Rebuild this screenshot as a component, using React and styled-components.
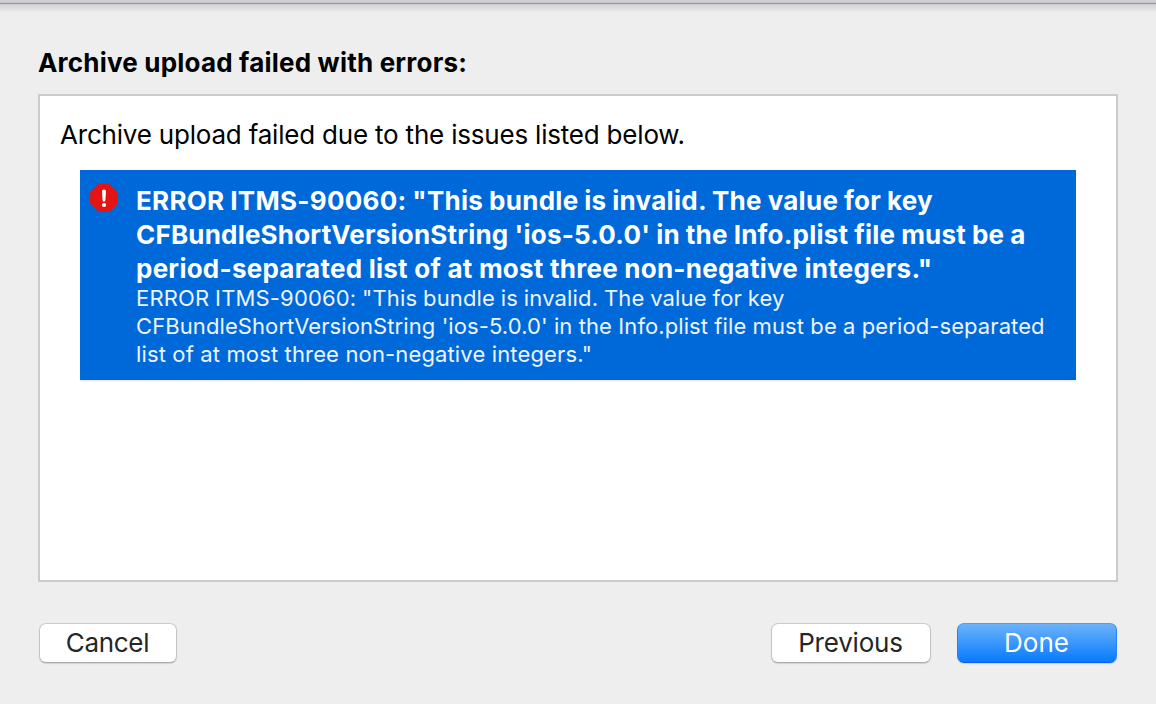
import React from "react";
import styled, { createGlobalStyle } from "styled-components";

const GlobalStyle = createGlobalStyle`
  * { box-sizing: border-box; }
  body { margin: 0; background: #eeeeee; }
`;

const Sheet = styled.main`
  width: 1156px;
  height: 704px;
  display: flex;
  flex-direction: column;
  background: #eeeeee;
  font-family: Inter, "Liberation Sans", sans-serif;
  font-size: 26px;
  color: #000;
  overflow: hidden;
`;

const TopEdge = styled.div`
  flex: none;
  height: 12px;
  background: linear-gradient(
    #d1cfd3 0 2px, #c7c5c9 2px 3px, #98969b 3px 4px, #d0d0d1 4px 5px,
    #d5d5d6 5px 6px, #dadadb 6px 8px, #e0e0e0 8px 10px, #e7e7e7 10px 12px
  );
`;

const Content = styled.div`
  flex: 1;
  display: flex;
  flex-direction: column;
  padding: 34px 38px 40px;
`;

const Heading = styled.h1`
  margin: 0 0 14px;
  font-size: 26px;
  line-height: 34px;
  font-weight: 700;
  letter-spacing: 0.2px;
  white-space: nowrap;
`;

const Panel = styled.section`
  height: 488px;
  padding: 22px 40px;
  border: 2px solid #cbcbcb;
  background: #fff;
`;

const Intro = styled.p`
  margin: 0 0 18px -20px;
  line-height: 34px;
  letter-spacing: -0.2px;
  white-space: nowrap;
`;

const Issue = styled.article`
  display: flex;
  height: 210px;
  padding: 13px 9px;
  background: #0069d9;
  color: #fff;
  box-shadow: 0 2px 0 -0.5px #ebebeb;
`;

const IssueIcon = styled.svg`
  flex: none;
  width: 30px;
  height: 30px;
  margin-right: 17px;
`;

const IssueText = styled.div`
  display: flex;
  flex-direction: column;
  padding-top: 1px;
`;

const Title = styled.div`
  font-weight: 700;
  line-height: 34px;
  white-space: nowrap;
`;

const Detail = styled.div`
  margin-top: -2px;
  font-size: 22px;
  line-height: 28px;
  white-space: nowrap;
  color: #edf4fc;
`;

const Line = styled.div`
  letter-spacing: ${(p) => p.$tracking}px;
  word-spacing: ${(p) => p.$gap}px;
`;

const Actions = styled.footer`
  display: flex;
  gap: 26px;
  margin: 41px 1px 0;
`;

const Button = styled.button`
  width: ${(p) => p.$width}px;
  height: 40px;
  padding: 0 1px 0 0;
  border: 1px solid;
  border-color: ${(p) => (p.$primary ? "#4b9df5 #2a83f7 #0a60f5" : "#cbcbcb #c4c4c4 #acacac")};
  border-radius: 7px;
  background: ${(p) => (p.$primary ? "linear-gradient(#6cb3fa, #077aff)" : "#fff")};
  box-shadow: 0 1px 1px rgba(0, 0, 0, 0.12);
  color: ${(p) => (p.$primary ? "#fff" : "#262626")};
  font: 400 26px/38px Inter, "Liberation Sans", sans-serif;
  letter-spacing: ${(p) => p.$tracking || 0}px;
  margin-right: ${(p) => (p.$leading ? "auto" : "0")};
`;

const titleLines = [
  ['ERROR ITMS-90060: "This bundle is invalid. The value for key', 0.28, -0.6],
  ["CFBundleShortVersionString 'ios-5.0.0' in the Info.plist file must be a", 0.2, -0.35],
  ['period-separated list of at most three non-negative integers."', 0.24, 0],
];

const detailLines = [
  ['ERROR ITMS-90060: "This bundle is invalid. The value for key', 0.16, -0.6],
  ["CFBundleShortVersionString 'ios-5.0.0' in the Info.plist file must be a period-separated", 0.09, 0],
  ['list of at most three non-negative integers."', 0.14, 0],
];

function ErrorIcon() {
  return (
    <IssueIcon viewBox="0 0 30 30" aria-label="Error">
      <path d="M9.6 1h10.8L29 9.6v10.8L20.4 29H9.6L1 20.4V9.6z" fill="#e31414" />
      <path d="M13 8.6a2 2 0 0 1 4 0l-.6 8.6a1.4 1.4 0 0 1-2.8 0z" fill="#fff" />
      <circle cx="15" cy="22" r="2.1" fill="#fff" />
    </IssueIcon>
  );
}

export default function App() {
  return (
    <>
      <GlobalStyle />
      <Sheet>
        <TopEdge />
        <Content>
          <Heading>Archive upload failed with errors:</Heading>
          <Panel>
            <Intro>Archive upload failed due to the issues listed below.</Intro>
            <Issue>
              <ErrorIcon />
              <IssueText>
                <Title>
                  {titleLines.map(([text, tracking, gap]) => (
                    <Line key={text} $tracking={tracking} $gap={gap}>{text}</Line>
                  ))}
                </Title>
                <Detail>
                  {detailLines.map(([text, tracking, gap]) => (
                    <Line key={text} $tracking={tracking} $gap={gap}>{text}</Line>
                  ))}
                </Detail>
              </IssueText>
            </Issue>
          </Panel>
          <Actions>
            <Button $width={138} $tracking={-0.3} $leading>Cancel</Button>
            <Button $width={160} $tracking={-0.2}>Previous</Button>
            <Button $width={160} $primary>Done</Button>
          </Actions>
        </Content>
      </Sheet>
    </>
  );
}
